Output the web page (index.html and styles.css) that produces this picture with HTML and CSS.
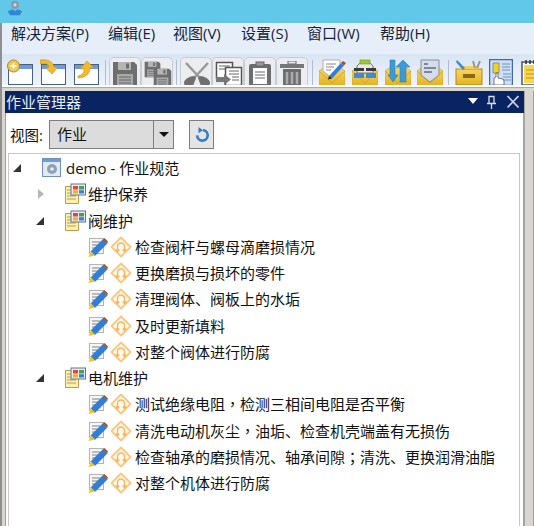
FILE: index.html
```html
<!DOCTYPE html>
<html lang="zh-CN">
<head>
<meta charset="utf-8">
<title>作业管理器</title>
<link rel="stylesheet" href="styles.css">
</head>
<body>
<svg class="defs" aria-hidden="true">
  <defs>
    <linearGradient id="gold" x1="0" y1="0" x2="0" y2="1"><stop offset="0" stop-color="#f8d564"/><stop offset="1" stop-color="#e5b21c"/></linearGradient>
    <symbol id="pen" viewBox="0 0 20 20">
      <rect x="1.500" y="1.500" width="14" height="15" fill="#f6f6f6" stroke="#b4b4b4"/>
      <path d="M4 5h8M4 8h6M4 11h4" stroke="#808080"/>
      <path d="M3 14.500L15 2.500l4 4L7 18.500z" fill="#2f7fd8" stroke="#1d5fb0" stroke-width=".6"/>
      <path d="M15 2.500l1.500-1.500 3.500 3.500L19 6.500z" fill="#9c5a2c"/>
      <path d="M3 14.500l4 4-6.500 1.500z" fill="#f2c21c"/>
    </symbol>
    <symbol id="task" viewBox="0 0 22 22">
      <path d="M11 1.500L20.500 11 11 20.500 1.500 11z" fill="#fffaf0" stroke="#fbc77e" stroke-width="1.800" stroke-linejoin="round"/>
      <path d="M7.500 15.500v-5a3.500 3.500 0 0 1 7 0v5M5.800 13.500l1.700 2.200 1.700-2.200M12.800 13.500l1.700 2.200 1.700-2.200" fill="none" stroke="#f9b45c" stroke-width="1.400"/>
    </symbol>
    <symbol id="group" viewBox="0 0 22 22">
      <path d="M1.500 3.500h13v17h-13z" fill="#fdf0a8" stroke="#c49a45"/>
      <path d="M3 7h6M3 10h6M3 13h9M3 16h9" stroke="#9a8a55" stroke-width=".8"/>
      <rect x="7" y="1" width="14.500" height="11" fill="#e8edf3" stroke="#5d7593"/>
      <rect x="9" y="3" width="5" height="3.500" fill="#e0483a"/>
      <rect x="15" y="3" width="5" height="3.500" fill="#4d9d4a"/>
      <rect x="9" y="7.200" width="5" height="3.300" fill="#f3b21f"/>
      <rect x="15" y="7.200" width="5" height="3.300" fill="#3f7fd0"/>
    </symbol>
    <symbol id="win" viewBox="0 0 26 26">
      <rect x=".5" y="4.500" width="24" height="20" fill="#fff" stroke="#47607f"/>
      <rect x="1" y="5" width="23" height="4" fill="#6f9bde"/>
    </symbol>
    <symbol id="disk" viewBox="0 0 26 26">
      <path d="M1 1h21l3 3v21H1z" fill="#6e6e6e"/>
      <rect x="6" y="1" width="13" height="8" fill="#b5b5b5"/>
      <rect x="14" y="2.500" width="3" height="5" fill="#6e6e6e"/>
      <rect x="5" y="13" width="16" height="12" fill="#a9a9a9"/>
      <path d="M7 16h12M7 19h12M7 22h12" stroke="#666"/>
    </symbol>
    <symbol id="mail" viewBox="0 0 26 26">
      <path d="M0 11l4-3h18l4 3v15H0z" fill="url(#gold)" stroke="#c79f3a" stroke-width=".6"/>
      <path d="M0 11l13 12 13-12" fill="none" stroke="#c79f3a" stroke-width=".8"/>
    </symbol>
  </defs>
</svg>

<header class="titlebar">
  <svg class="app-logo" viewBox="0 0 20 20">
    <circle cx="10" cy="6" r="5" fill="#8d99a6"/><circle cx="10" cy="6" r="2" fill="#d5dbe0"/>
    <path d="M1 14l6-2.500 3 2.500 3-2.500 6 2.500-3 5H4z" fill="#2f86d6"/>
  </svg>
</header>

<nav class="menubar">
  <span class="menu menu-a">解决方案(P)</span>
  <span class="menu menu-b">编辑(E)</span>
  <span class="menu menu-c">视图(V)</span>
  <span class="menu menu-d">设置(S)</span>
  <span class="menu menu-e">窗口(W)</span>
  <span class="menu">帮助(H)</span>
</nav>

<div class="toolbar">
  <span class="tool w-33"><svg width="27" height="27" viewBox="0 0 27 27"><use href="#win" x="1" y="1" width="26" height="26"/><circle cx="6.500" cy="7" r="6" fill="#f0c952" stroke="#a88a2c"/><path d="M3.500 7h6M6.500 4v6" stroke="#fff" stroke-width="1.500"/></svg></span>
  <span class="tool w-33"><svg width="27" height="27" viewBox="0 0 27 27"><use href="#win" x="1" y="1" width="26" height="26"/><path d="M0 1c7-1 13 1 14 7l4 0-6 7-6-6 3-1C9 5 5 4 0 5z" fill="#f2b92a" stroke="#b48a1c" stroke-width=".5"/></svg></span>
  <span class="tool w-32"><svg width="27" height="27" viewBox="0 0 27 27"><use href="#win" x="1" y="1" width="26" height="26"/><path d="M5 17c4-1 6-3 6-7l-4 0 7-8 7 7-4 0c0 6-5 10-12 10z" fill="#f2b92a" stroke="#b48a1c" stroke-width=".5"/></svg></span>
  <span class="sep"></span>
  <span class="tool btn"><svg width="26" height="26"><use href="#disk"/></svg></span>
  <span class="tool btn"><svg width="28" height="26" viewBox="0 0 28 26"><use href="#disk" x="0" y="0" width="17" height="17"/><use href="#disk" x="9" y="7" width="19" height="19"/></svg></span>
  <span class="sep sep-b"></span>
  <span class="tool btn"><svg width="28" height="26" viewBox="0 0 28 26"><path d="M3 2l14 15M25 2L11 17" stroke="#999" stroke-width="2.500"/><path d="M1 22c0-4 6-7 10-7l2 2-3 8c-4 1-9 1-9-3zM27 22c0-4-6-7-10-7l-2 2 3 8c4 1 9 1 9-3z" fill="#707070"/></svg></span>
  <span class="tool btn"><svg width="28" height="26" viewBox="0 0 28 26"><rect x="1.500" y="1.500" width="16" height="16" fill="#fff" stroke="#555" stroke-width="1.500"/><path d="M4 5h11M4 8h8" stroke="#666"/><rect x="10.500" y="6.500" width="16" height="18" fill="#fff" stroke="#555" stroke-width="1.500"/><path d="M14 10h10M14 13h10M17 16h7M17 19h7" stroke="#666"/><path d="M1 16h8v-3l7 5.500-7 5.500v-3H1z" fill="#777"/></svg></span>
  <span class="tool btn"><svg width="26" height="26" viewBox="0 0 26 26"><rect x="2" y="3" width="22" height="23" rx="2" fill="#6d6d6d"/><rect x="6" y="7" width="14" height="16" fill="#fff"/><rect x="9" y="1" width="8" height="4" fill="#999" stroke="#666"/><path d="M8 11h10M8 14h10M8 17h10" stroke="#666"/></svg></span>
  <span class="tool btn"><svg width="26" height="26" viewBox="0 0 26 26"><rect x="9" y="0" width="8" height="3" fill="none" stroke="#666"/><rect x="1" y="3" width="24" height="4" fill="#777"/><rect x="4" y="8" width="18" height="18" fill="#6e6e6e"/><path d="M8 11v12M13 11v12M18 11v12" stroke="#aaa" stroke-width="2.500"/></svg></span>
  <span class="sep sep-c"></span>
  <span class="tool m-c1"><svg width="27" height="27" viewBox="0 0 27 27"><use href="#mail" y="1" width="26" height="26"/><path d="M4 1h17v8l-8 10-9-7z" fill="#fff" stroke="#b0b0b0"/><path d="M7 5h10M7 8h8M7 11h5" stroke="#888"/><path d="M10 17L22 4l3 2.500L13 19.500z" fill="#2f7fd8"/><path d="M22 4l2-2 3 2-2 2.500z" fill="#b04a2a"/><path d="M10 17l3 2.500-4 1z" fill="#222"/></svg></span>
  <span class="tool m-c2"><svg width="27" height="27" viewBox="0 0 27 27"><use href="#mail" y="1" width="26" height="26"/><path d="M5 7l3-3h10l3 3v7H5z" fill="#e8e8e8" stroke="#777"/><rect x="8" y="1" width="10" height="4" fill="#9ccb2f" stroke="#6e9a1c" stroke-width=".6"/><rect x="2" y="9" width="10" height="3" fill="#3c3c3c"/><rect x="14" y="9" width="10" height="3" fill="#3c3c3c"/><rect x="2" y="14" width="10" height="5" fill="#3d8ad8"/><rect x="14" y="14" width="10" height="5" fill="#3d8ad8"/></svg></span>
  <span class="tool m-c3"><svg width="27" height="27" viewBox="0 0 27 27"><use href="#mail" y="1" width="26" height="26"/><path d="M5 2h5v15h3l-5 7-5-7h2z" fill="#3d9ad8" stroke="#1f70b0" stroke-width=".5" transform="translate(0 -1)"/><path d="M18 1l7 7h-4v15h-6V8h-4z" fill="#3d9ad8" stroke="#1f70b0" stroke-width=".5"/></svg></span>
  <span class="tool m-c4"><svg width="27" height="27" viewBox="0 0 27 27"><use href="#mail" y="1" width="26" height="26"/><path d="M4 1h18v15l-9 7-9-7z" fill="#d6dde6" stroke="#7f8fa3"/><path d="M7 5h4M7 9h12M7 13h8" stroke="#5d6f85" stroke-width="1.500"/></svg></span>
  <span class="sep sep-d"></span>
  <span class="tool m-d1"><svg width="28" height="27" viewBox="0 0 28 27"><rect x="1" y="10" width="26" height="16" fill="url(#gold)" stroke="#a98a2a"/><path d="M3 10l2-3h18l2 3" fill="#f6cf58"/><rect x="8" y="15" width="12" height="4" fill="#8a6a14"/><path d="M2 1l8 8-2 2-7-8z" fill="#3d8ad8"/><path d="M18 2l2 7M25 2l-3 7" stroke="#999" stroke-width="2"/></svg></span>
  <span class="tool m-d2"><svg width="24" height="27" viewBox="0 0 24 27"><rect x=".5" y=".5" width="23" height="26" fill="#cfe0f5" stroke="#3f6aa3" stroke-width="1.500"/><rect x="4" y="4" width="6" height="10" fill="#f7d11e" stroke="#3f6aa3" stroke-width=".6"/><path d="M13 5h8M13 8h8M13 11h8M14 15h8M14 18h8M14 21h8" stroke="#6d90c0"/><path d="M5 26v-7l2-1v-4h2v5l5 1 1 2v4z" fill="#fff" stroke="#444" stroke-width=".7"/></svg></span>
  <span class="tool m-d3"><svg width="16" height="27" viewBox="0 0 16 27"><rect x="1" y="3" width="24" height="23" fill="#fff" stroke="#3f5a7f" stroke-width="1.500"/><rect x="3" y="6" width="20" height="18" fill="#f9d64a"/><path d="M5 1v4M9 1v4M13 1v4" stroke="#333" stroke-width="1.500"/><path d="M5 11h14M5 15h14M5 19h14" stroke="#b8922c"/></svg></span>
</div>
<div class="toolbar-edge"></div>

<main class="workspace">
  <section class="panel">
    <div class="panel-head">
      <h1 class="panel-title">作业管理器</h1>
      <svg class="head-icons" width="51" height="14" viewBox="0 0 51 14"><path d="M0 3h10L5 9z" fill="#fff"/><path d="M21 1.500h5v7h-5zM19 8.500h9M23.500 9v5" fill="none" stroke="#d9dfe9" stroke-width="1.300"/><path d="M39.500 1l11 11.500M50.500 1L39.500 12.500" stroke="#c9d3e2" stroke-width="1.700"/></svg>
    </div>
    <div class="viewbar">
      <label class="view-label">视图:</label>
      <div class="combo"><span class="combo-text">作业</span><span class="combo-btn"><i class="caret"></i></span></div>
      <button class="refresh" type="button" aria-label="刷新"><svg width="14" height="17" viewBox="0 0 16 18"><path d="M9 4a6 6 0 1 1-6.500 6" fill="none" stroke="#2f7fc8" stroke-width="3"/><path d="M4 .5v7L9 4z" fill="#2f7fc8"/></svg></button>
    </div>
    <div class="tree">
      <div class="row r0"><i class="exp open"></i><svg class="ico-root" width="20" height="20" viewBox="0 0 20 20"><rect x=".5" y=".5" width="18" height="18" fill="#e4e9f0" stroke="#6f8fc0"/><rect x="1" y="1" width="17" height="3" fill="#6f9bde"/><circle cx="10" cy="11" r="5" fill="#8ea2b5"/><circle cx="10" cy="11" r="1.800" fill="#e8edf3"/></svg><span class="t">demo - 作业规范</span></div>
      <div class="row r1"><i class="exp closed"></i><svg class="ico-g" width="22" height="22"><use href="#group"/></svg><span class="t">维护保养</span></div>
      <div class="row r1"><i class="exp open"></i><svg class="ico-g" width="22" height="22"><use href="#group"/></svg><span class="t">阀维护</span></div>
      <div class="row r2"><svg width="20" height="20"><use href="#pen"/></svg><svg class="ico-t" width="22" height="22"><use href="#task"/></svg><span class="t">检查阀杆与螺母滴磨损情况</span></div>
      <div class="row r2"><svg width="20" height="20"><use href="#pen"/></svg><svg class="ico-t" width="22" height="22"><use href="#task"/></svg><span class="t">更换磨损与损坏的零件</span></div>
      <div class="row r2"><svg width="20" height="20"><use href="#pen"/></svg><svg class="ico-t" width="22" height="22"><use href="#task"/></svg><span class="t">清理阀体、阀板上的水垢</span></div>
      <div class="row r2"><svg width="20" height="20"><use href="#pen"/></svg><svg class="ico-t" width="22" height="22"><use href="#task"/></svg><span class="t">及时更新填料</span></div>
      <div class="row r2"><svg width="20" height="20"><use href="#pen"/></svg><svg class="ico-t" width="22" height="22"><use href="#task"/></svg><span class="t">对整个阀体进行防腐</span></div>
      <div class="row r1"><i class="exp open"></i><svg class="ico-g" width="22" height="22"><use href="#group"/></svg><span class="t">电机维护</span></div>
      <div class="row r2"><svg width="20" height="20"><use href="#pen"/></svg><svg class="ico-t" width="22" height="22"><use href="#task"/></svg><span class="t">测试绝缘电阻<span class="punct" lang="zh-TW">，</span>检测三相间电阻是否平衡</span></div>
      <div class="row r2"><svg width="20" height="20"><use href="#pen"/></svg><svg class="ico-t" width="22" height="22"><use href="#task"/></svg><span class="t">清洗电动机灰尘<span class="punct" lang="zh-TW">，</span>油垢、检查机壳端盖有无损伤</span></div>
      <div class="row r2"><svg width="20" height="20"><use href="#pen"/></svg><svg class="ico-t" width="22" height="22"><use href="#task"/></svg><span class="t">检查轴承的磨损情况、轴承间隙<span class="punct" lang="zh-TW">；</span>清洗、更换润滑油脂</span></div>
      <div class="row r2"><svg width="20" height="20"><use href="#pen"/></svg><svg class="ico-t" width="22" height="22"><use href="#task"/></svg><span class="t">对整个机体进行防腐</span></div>
    </div>
  </section>
</main>
</body>
</html>
```
FILE: styles.css
```css
* { box-sizing: border-box; }
html, body { margin: 0; height: 100%; }
body {
  width: 534px;
  height: 526px;
  overflow: hidden;
  background: #d9d7d0;
  font-family: "Open Sans", "Noto Sans CJK SC", sans-serif;
  font-size: 15px;
  color: #111;
  display: flex;
  flex-direction: column;
}
.defs { width: 0; height: 0; position: absolute; }
.titlebar { height: 23px; flex: none; background: #62c8ea; }
.app-logo { display: block; width: 16px; height: 16px; margin-left: 7px; }
.menubar {
  height: 31px; flex: none; background: #e6eef9;
  display: flex; align-items: flex-start;
  border-left: 2px solid #8f8f8f; padding: 0 0 0 9px;
  font-size: 15px; line-height: 20px; color: #14233a;
}
.menu-a { width: 97px; }
.menu-b { width: 65px; }
.menu-c { width: 68px; }
.menu-d { width: 66px; }
.menu-e { width: 73px; }
.toolbar {
  height: 31px; flex: none;
  background: linear-gradient(#d9e5f4, #eef3fb);
  border-left: 2px solid #8f8f8f;
  display: flex; align-items: flex-start; padding: 5px 0 0 5px;
  overflow: hidden;
}
.toolbar-edge { height: 6px; flex: none; background: linear-gradient(#fff 0 2px, #a9a9a9 2px 3px, #d9d7d0 3px); border-left: 2px solid #8f8f8f; }
.tool { display: flex; flex: none; height: 27px; }
.tool svg { display: block; flex: none; }
.w-32 { width: 32px; }
.w-33 { width: 33px; }
.sep { width: 1px; height: 26px; background: #b3bdc9; flex: none; margin: 1px 3px 0 0; }
.btn {
  width: 32px; height: 30px; padding: 3px 0 0 2px;
  margin-top: -2px;
  background: #ecedf0; border: 1px solid #c8cdd4; border-bottom: 0; border-radius: 5px 5px 0 0;
}
.sep-b { margin-left: 3px; }
.sep-c { margin-left: 4px; margin-right: 6px; }
.m-c1 { width: 33px; }
.m-c2 { width: 33px; }
.m-c3 { width: 32px; }
.m-c4 { width: 31px; }
.sep-d { margin-right: 6px; }
.m-d1 { width: 34px; }
.m-d2 { width: 32px; }
.m-d3 { width: 14px; }

.workspace { flex: 1; min-height: 0; border-left: 2px solid #8f8f8f; border-right: 1px solid #9d9d9d; padding-left: 3px; }
.panel {
  width: 520px; height: 100%;
  background: #fff;
  border-left: 1px solid #9d9d9d; border-right: 2px solid #a5a5a5;
  display: flex; flex-direction: column;
}
.panel-head {
  height: 22px; flex: none; margin-left: -1px; margin-right: -1px;
  background: #0a2463; color: #fff;
  display: flex; align-items: center; justify-content: space-between;
  padding: 0 4px 0 1px;
}
.panel-title { margin: 0; font-size: 15px; font-weight: 400; line-height: 20px; color: #e9edf5; }
.viewbar { height: 40px; flex: none; display: flex; align-items: center; padding: 3px 0 0 4px; }
.view-label { width: 39px; font-size: 14.500px; }
.combo { width: 125px; height: 29px; display: flex; border: 1px solid #7d7d7d; background: #dcdcdc; }
.combo-text { flex: 1; padding-left: 7px; line-height: 27px; }
.combo-btn { width: 20px; border-left: 1px solid #7d7d7d; display: flex; align-items: center; justify-content: center; }
.caret { width: 0; height: 0; border: 5px solid transparent; border-top: 5px solid #111; border-bottom: 0; }
.refresh { width: 25px; height: 29px; margin-left: 15px; padding: 0; border: 1px solid #7d7d7d; background: #e4e4e4; display: flex; align-items: center; justify-content: center; }
.tree {
  flex: 1; margin: 0 3px 0 2px;
  border: 1px solid #c8c8c8; border-bottom: 0;
  padding-top: 1px;
}
.row { height: 26.250px; display: flex; align-items: center; }
.t { line-height: 20px; white-space: nowrap; }
.punct { font-family: "Noto Sans CJK TC", sans-serif; }
.exp { flex: none; display: block; width: 0; height: 0; }
.exp.open { border-style: solid; border-width: 0 0 8px 8px; border-color: transparent transparent #333 transparent; }
.exp.closed { border-style: solid; border-width: 5.500px 0 5.500px 6px; border-color: transparent transparent transparent #b8b8b8; }
.r0 { padding-left: 4px; }
.r0 .exp { margin-right: 21px; }
.r0 .t { margin-left: 4px; }
.r1 { padding-left: 27px; }
.r1 .exp { margin-right: 20px; }
.r1 .exp.closed { margin-left: 2px; }
.r1 .t { margin-left: 2px; }
.r2 { padding-left: 79px; }
.ico-t { margin-left: 2px; margin-right: 3px; }
.head-icons { margin-right: 1px; }
```
